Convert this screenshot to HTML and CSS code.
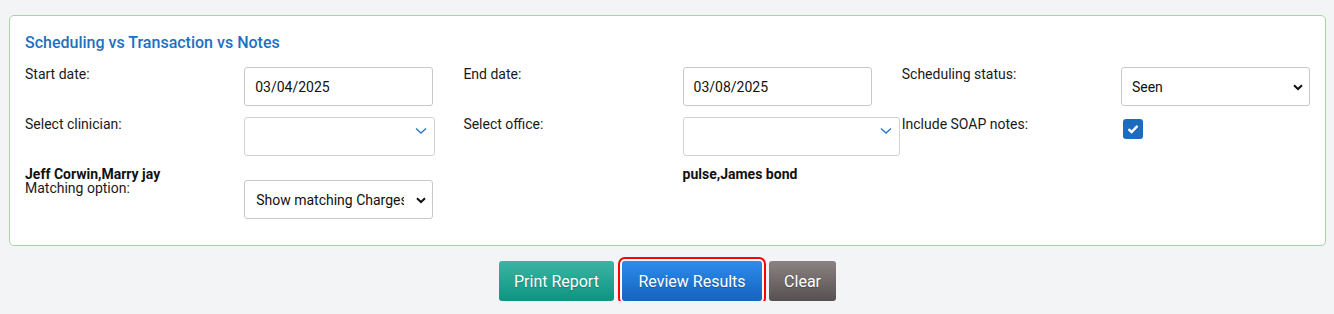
FILE: index.html
```html
<!DOCTYPE html>
<html>
<head>
<meta charset="utf-8">
<link rel="stylesheet" href="styles.css">
</head>
<body>
<div class="page">
  <section class="card">
    <h2 class="title">Scheduling vs Transaction vs Notes</h2>
    <div class="grid">
      <div class="label">Start date:</div>
      <div class="field"><div class="input w189">03/04/2025</div></div>
      <div class="label">End date:</div>
      <div class="field"><div class="input w189">03/08/2025</div></div>
      <div class="label">Scheduling status:</div>
      <div class="field"><div class="input select w189">Seen<svg class="caret" width="10" height="7" viewBox="0 0 10 7"><path d="M1 1.2 L5 5 L9 1.2" fill="none" stroke="#111" stroke-width="2"/></svg></div></div>

      <div class="label">Select clinician:</div>
      <div class="field"><div class="input multi w191"><svg class="chev" width="12" height="8" viewBox="0 0 12 8"><path d="M1 1.5 L6 6 L11 1.5" fill="none" stroke="#2a78c8" stroke-width="1.4"/></svg></div></div>
      <div class="label">Select office:</div>
      <div class="field"><div class="input multi w217"><svg class="chev" width="12" height="8" viewBox="0 0 12 8"><path d="M1 1.5 L6 6 L11 1.5" fill="none" stroke="#2a78c8" stroke-width="1.4"/></svg></div></div>
      <div class="label">Include SOAP notes:</div>
      <div class="field"><span class="check"><svg width="12" height="10" viewBox="0 0 12 10"><path d="M1.5 5.2 L4.6 8 L10.5 1.8" fill="none" stroke="#fff" stroke-width="2.4"/></svg></span></div>

      <div class="label"><div class="names">Jeff Corwin,Marry jay</div>Matching option:</div>
      <div class="field"><div class="input select w189 low"><span class="clip">Show matching Charges</span><svg class="caret" width="10" height="7" viewBox="0 0 10 7"><path d="M1 1.2 L5 5 L9 1.2" fill="none" stroke="#111" stroke-width="2"/></svg></div></div>
      <div class="label"></div>
      <div class="field"><div class="names">pulse,James bond</div></div>
      <div class="label"></div>
      <div class="field"></div>
    </div>
  </section>
  <div class="actions">
    <button class="btn print">Print Report</button>
    <button class="btn review">Review Results</button>
    <button class="btn clear">Clear</button>
  </div>
</div>
</body>
</html>
```
FILE: styles.css
```css
* { box-sizing: border-box; }
html, body { margin: 0; padding: 0; }
body {
  background: #f3f4f6;
  font-family: Roboto, "Liberation Sans", Arial, sans-serif;
  font-size: 14px;
  color: #1a1a1a;
}
.page { padding: 15px 8px 0 9px; }
.card {
  background: #fff;
  border: 1px solid #a9d3a6;
  border-radius: 5px;
  padding: 17px 15px 25px 15px;
  height: 231px;
}
.title {
  margin: 0 0 14px 0;
  font-size: 16px;
  font-weight: 500;
  line-height: 20px;
  color: #1f6fc1;
}
.grid {
  display: grid;
  grid-template-columns: repeat(6, 219.2px);
  row-gap: 11px;
}
.label { line-height: 15px; }
.names { font-weight: 700; line-height: 14px; color: #111; }
.input {
  position: relative;
  height: 39px;
  border: 1px solid #c8c8c8;
  border-radius: 3px;
  padding: 0 10px;
  display: flex;
  align-items: center;
  background: #fff;
  color: #111;
  white-space: nowrap;
  overflow: hidden;
}
.w189 { width: 189px; }
.w191 { width: 191px; }
.w217 { width: 217px; }
.low { margin-top: 13px; }
.select { padding-right: 28px; }
.clip { display: block; width: 149px; overflow: hidden; padding-left: 1px; }
.caret { position: absolute; right: 6px; top: 16px; }
.chev { position: absolute; right: 7px; top: 9px; }
.multi { border-color: #d3d3d3; }
.check {
  display: inline-flex;
  align-items: center;
  justify-content: center;
  width: 20px;
  height: 20px;
  margin-left: 2px;
  margin-top: 2px;
  background: #1b6bc1;
  border-radius: 3px;
}
.actions {
  display: flex;
  justify-content: center;
  gap: 8px;
  margin-top: 15px;
}
.btn {
  height: 40px;
  border: none;
  border-radius: 3px;
  padding: 0 15px;
  font-family: Roboto, "Liberation Sans", Arial, sans-serif;
  font-size: 16px;
  color: #fff;
  text-shadow: 0 1px 1px rgba(0,0,0,0.25);
}
.print { background: linear-gradient(#3cb4a3, #0c9582); }
.review {
  padding: 0 16.5px;
  background: linear-gradient(#2d8ceb, #1563bf);
  box-shadow: 0 0 0 2px #ffffff, 0 0 0 4px #f00;
}
.clear { background: linear-gradient(#8b8382, #565050); margin-left: -1px; }
```
